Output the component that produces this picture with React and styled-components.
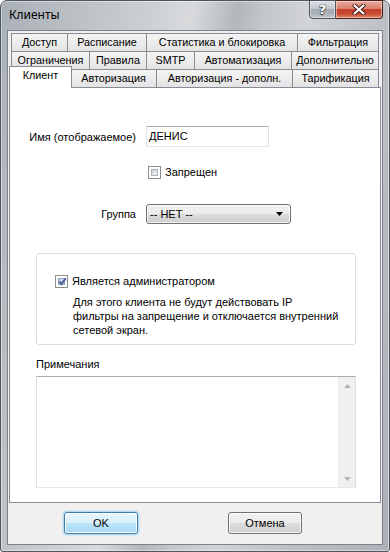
import React from "react";
import styled, { createGlobalStyle } from "styled-components";

const GlobalStyle = createGlobalStyle`
  html, body {
    margin: 0;
    padding: 0;
    width: 390px;
    height: 552px;
    overflow: hidden;
    background: #ffffff;
  }
  body {
    font-family: "Liberation Sans", Arial, sans-serif;
    font-size: 11px;
    color: #000;
  }
  * { box-sizing: border-box; }
`;

const Window = styled.div`
  width: 390px;
  height: 552px;
  display: flex;
  flex-direction: column;
  border: 1px solid #4f565e;
  border-radius: 7px 7px 3px 3px;
  padding: 0 6px 6px 6px;
  background: linear-gradient(
    100deg,
    #a9b0b7 0%,
    #b9bec3 14%,
    #c9ccd0 28%,
    #d8dadc 40%,
    #b2b7bc 49%,
    #c4c7cb 55%,
    #d2d4d7 64%,
    #bcc0c4 80%,
    #adb2b8 100%
  );
  box-shadow: inset 0 0 0 1px rgba(255, 255, 255, 0.45);
`;

const TitleBar = styled.div`
  height: 29px;
  flex: none;
  display: flex;
  align-items: flex-start;
  padding-left: 2px;
`;

const TitleText = styled.div`
  font-family: "Noto Sans", "Open Sans", sans-serif;
  font-size: 12px;
  line-height: 16px;
  margin-top: 6px;
  color: #000;
`;

const CaptionButtons = styled.div`
  margin-left: auto;
  margin-top: -1px;
  display: flex;
`;

const CaptionButton = styled.div`
  height: 19px;
  width: ${(p) => p.$w}px;
  display: flex;
  align-items: center;
  justify-content: center;
  border: 1px solid ${(p) => (p.$close ? "#4a1d17" : "#4c535b")};
  border-left-width: ${(p) => (p.$close ? 0 : 1)}px;
  border-radius: ${(p) => (p.$close ? "0 0 4px 0" : "0 0 0 4px")};
  background: ${(p) =>
    p.$close
      ? "linear-gradient(#e9a99b 0%, #d9826f 45%, #c7402b 50%, #c84a33 75%, #e08a68 100%)"
      : "linear-gradient(#d9dde1 0%, #c3c8cd 45%, #a5acb4 50%, #a9b0b8 75%, #c3c9cf 100%)"};
  box-shadow: inset 0 0 0 1px rgba(255, 255, 255, 0.45);
`;

const HelpGlyph = styled.span`
  font-family: "DejaVu Sans", sans-serif;
  font-weight: bold;
  font-size: 13px;
  line-height: 14px;
  color: #fff;
  text-shadow: 0 0 1px #2b3036, 0 0 1px #2b3036, 0 1px 1px #2b3036;
`;

const ClientArea = styled.div`
  flex: 1;
  display: flex;
  flex-direction: column;
  background: #f0f0f0;
  border: 1px solid #7b828a;
`;

const TabControl = styled.div`
  margin: 2px 1px 0 1px;
  display: flex;
  flex-direction: column;
`;

const TabStrip = styled.div`
  padding: 0 2px;
  display: flex;
  flex-direction: column;
`;

const TabRow = styled.div`
  display: flex;
  align-items: flex-start;
  height: 18px;
`;

const Tab = styled.div`
  flex: none;
  width: ${(p) => p.$w}px;
  height: 18px;
  border-top: 1px solid #898c95;
  border-left: 1px solid #898c95;
  background: linear-gradient(#f4f4f4 0%, #ececec 50%, #e3e3e3 100%);
  text-align: center;
  white-space: nowrap;
  font-size: 10.8px;
  line-height: 17px;
  &:last-child {
    border-right: 1px solid #898c95;
  }
`;

const ActiveTab = styled(Tab)`
  position: relative;
  z-index: 2;
  width: ${(p) => p.$w + 4}px;
  height: 22px;
  margin: -3px -2px -1px -2px;
  border-right: 1px solid #898c95;
  background: #ffffff;
`;

const Panel = styled.div`
  position: relative;
  z-index: 1;
  height: 416px;
  background: #ffffff;
  border: 1px solid #898c95;
  padding-top: 38px;
  display: flex;
  flex-direction: column;
`;

const FieldRow = styled.div`
  display: flex;
  align-items: center;
  gap: 10px;
  margin-top: ${(p) => p.$mt || 0}px;
`;

const FieldLabel = styled.div`
  width: 126px;
  text-align: right;
  line-height: 14px;
`;

const TextBox = styled.div`
  width: 123px;
  height: 21px;
  border: 1px solid;
  border-color: #abadb3 #dbdfe6 #e3e9ef #e2e3ea;
  background: #fff;
  padding: 0 2px;
  line-height: 19px;
`;

const CheckRow = styled.div`
  display: flex;
  align-items: center;
  gap: 4px;
  margin-top: ${(p) => p.$mt || 0}px;
  padding-left: ${(p) => p.$pl || 0}px;
  line-height: 14px;
`;

const CheckBoxOuter = styled.div`
  position: relative;
  width: 13px;
  height: 13px;
  flex: none;
  border: 1px solid #8e8f8f;
  background: #fff;
  padding: 2px;
`;

const CheckBoxInner = styled.div`
  width: 7px;
  height: 7px;
  border: 1px solid ${(p) => (p.$checked ? "#8ea3c0" : "#aeb3b9")};
  background: ${(p) =>
    p.$checked
      ? "linear-gradient(135deg, #b9cbe6 0%, #dfe9f6 100%)"
      : "linear-gradient(135deg, #cbcfd5 0%, #f6f6f6 100%)"};
`;

const CheckMark = styled.svg`
  position: absolute;
  left: 1px;
  top: 0px;
`;

const ComboBox = styled.div`
  width: 145px;
  height: 20px;
  border: 1px solid #707070;
  border-radius: 3px;
  background: linear-gradient(#f2f2f2 0%, #ebebeb 50%, #dddddd 50%, #cfcfcf 100%);
  box-shadow: inset 0 0 0 1px rgba(255, 255, 255, 0.75);
  display: flex;
  align-items: center;
  padding: 0 7px 0 3px;
  line-height: 14px;
`;

const ComboText = styled.div`
  flex: 1;
`;

const GroupBox = styled.div`
  margin: 29px 0 0 26px;
  width: 320px;
  height: 92px;
  border: 1px solid #d5dfe5;
  border-radius: 3px;
  padding: 20px 0 0 18px;
`;

const Description = styled.div`
  margin: 7px 0 0 18px;
  line-height: 14px;
`;

const NotesLabel = styled.div`
  margin: 12px 0 0 26px;
  line-height: 14px;
`;

const NotesArea = styled.div`
  margin: 5px 0 0 26px;
  width: 320px;
  height: 112px;
  border: 1px solid;
  border-color: #abadb3 #dbdfe6 #e3e9ef #e2e3ea;
  background: #fff;
  display: flex;
  justify-content: flex-end;
`;

const ScrollBar = styled.div`
  width: 17px;
  background: #f0f0f0;
  border-left: 1px solid #ececec;
  display: flex;
  flex-direction: column;
  justify-content: space-between;
  align-items: center;
  padding: 7px 0 6px;
`;

const ButtonRow = styled.div`
  display: flex;
  gap: 90px;
  padding: 9px 0 0 56px;
`;

const PushButton = styled.button`
  width: 74px;
  height: 22px;
  margin: 0;
  padding: 0;
  font-family: "Liberation Sans", Arial, sans-serif;
  font-size: 11px;
  color: #000;
  border-radius: 3px;
  border: 1px solid ${(p) => (p.$default ? "#3c7fb1" : "#707070")};
  background: ${(p) =>
    p.$default
      ? "linear-gradient(#eaf6fd 0%, #d9f0fc 50%, #bee6fd 50%, #a7d9f5 100%)"
      : "linear-gradient(#f2f2f2 0%, #ebebeb 50%, #dddddd 50%, #cfcfcf 100%)"};
  box-shadow: ${(p) =>
    p.$default
      ? "inset 0 0 0 1px #fff, 0 0 2px 1px rgba(90, 180, 240, 0.55)"
      : "inset 0 0 0 1px rgba(255,255,255,0.8)"};
`;

function CheckBox({ checked }) {
  return (
    <CheckBoxOuter>
      <CheckBoxInner $checked={checked} />
      {checked && (
        <CheckMark width="11" height="11" viewBox="0 0 11 11">
          <path d="M2.2 5.6 L4.4 8 L8.8 2.4" fill="none" stroke="#4a5f97" strokeWidth="2" />
        </CheckMark>
      )}
    </CheckBoxOuter>
  );
}

const tabRows = [
  [
    { label: "Доступ", w: 56 },
    { label: "Расписание", w: 79 },
    { label: "Статистика и блокировка", w: 151 },
    { label: "Фильтрация", w: 82 },
  ],
  [
    { label: "Ограничения", w: 78 },
    { label: "Правила", w: 57 },
    { label: "SMTP", w: 48 },
    { label: "Автоматизация", w: 97 },
    { label: "Дополнительно", w: 88 },
  ],
  [
    { label: "Клиент", w: 59, active: true },
    { label: "Авторизация", w: 86 },
    { label: "Авторизация - дополн.", w: 136 },
    { label: "Тарификация", w: 87 },
  ],
];

export default function App() {
  return (
    <>
      <GlobalStyle />
      <Window>
        <TitleBar>
          <TitleText>Клиенты</TitleText>
          <CaptionButtons>
            <CaptionButton $w={27}>
              <HelpGlyph>?</HelpGlyph>
            </CaptionButton>
            <CaptionButton $w={47} $close>
              <svg width="14" height="11" viewBox="0 0 14 11">
                <path d="M2.5 1.5 L11.5 9.5 M11.5 1.5 L2.5 9.5" stroke="#3a1712" strokeWidth="4" strokeLinecap="round" />
                <path d="M2.5 1.5 L11.5 9.5 M11.5 1.5 L2.5 9.5" stroke="#ffffff" strokeWidth="2.2" strokeLinecap="round" />
              </svg>
            </CaptionButton>
          </CaptionButtons>
        </TitleBar>
        <ClientArea>
          <TabControl>
            <TabStrip>
              {tabRows.map((row, i) => (
                <TabRow key={i}>
                  {row.map((t) =>
                    t.active ? (
                      <ActiveTab key={t.label} $w={t.w}>
                        {t.label}
                      </ActiveTab>
                    ) : (
                      <Tab key={t.label} $w={t.w}>
                        {t.label}
                      </Tab>
                    )
                  )}
                </TabRow>
              ))}
            </TabStrip>
            <Panel>
              <FieldRow>
                <FieldLabel>Имя (отображаемое)</FieldLabel>
                <TextBox>ДЕНИС</TextBox>
              </FieldRow>
              <CheckRow $mt={18} $pl={138}>
                <CheckBox />
                <span>Запрещен</span>
              </CheckRow>
              <FieldRow $mt={25}>
                <FieldLabel>Группа</FieldLabel>
                <ComboBox>
                  <ComboText>-- НЕТ --</ComboText>
                  <svg width="7" height="4" viewBox="0 0 7 4">
                    <path d="M0 0 H7 L3.5 4 Z" fill="#000" />
                  </svg>
                </ComboBox>
              </FieldRow>
              <GroupBox>
                <CheckRow>
                  <CheckBox checked />
                  <span>Является администратором</span>
                </CheckRow>
                <Description>
                  Для этого клиента не будут действовать IP
                  <br />
                  фильтры на запрещение и отключается внутренний
                  <br />
                  сетевой экран.
                </Description>
              </GroupBox>
              <NotesLabel>Примечания</NotesLabel>
              <NotesArea>
                <ScrollBar>
                  <svg width="7" height="4" viewBox="0 0 7 4">
                    <path d="M0 4 H7 L3.5 0 Z" fill="#b4b4b4" />
                  </svg>
                  <svg width="7" height="4" viewBox="0 0 7 4">
                    <path d="M0 0 H7 L3.5 4 Z" fill="#b4b4b4" />
                  </svg>
                </ScrollBar>
              </NotesArea>
            </Panel>
          </TabControl>
          <ButtonRow>
            <PushButton $default>OK</PushButton>
            <PushButton>Отмена</PushButton>
          </ButtonRow>
        </ClientArea>
      </Window>
    </>
  );
}
